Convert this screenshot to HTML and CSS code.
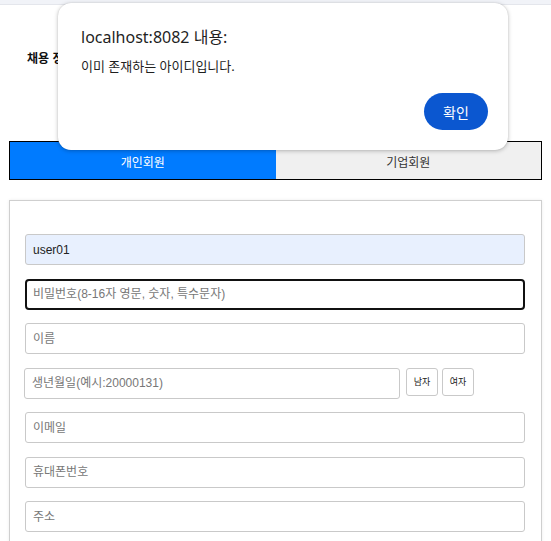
FILE: index.html
```html
<!DOCTYPE html>
<html lang="ko">
<head>
<meta charset="utf-8">
<title>회원가입</title>
<link rel="stylesheet" href="styles.css">
</head>
<body>
<div class="topbar"></div>
<main class="page">
  <header class="head">
    <h1 class="site-title">채용 정보</h1>
  </header>
  <div class="tabs">
    <div class="tab tab-active">개인회원</div>
    <div class="tab">기업회원</div>
  </div>
  <form class="card">
    <input class="field field-filled" type="text" value="user01">
    <input class="field field-focus" type="password" placeholder="비밀번호(8-16자 영문, 숫자, 특수문자)">
    <input class="field" type="text" placeholder="이름">
    <div class="birth-row">
      <input class="field field-birth" type="text" placeholder="생년월일(예시:20000131)">
      <button type="button" class="gender">남자</button>
      <button type="button" class="gender">여자</button>
    </div>
    <input class="field" type="text" placeholder="이메일">
    <input class="field" type="text" placeholder="휴대폰번호">
    <input class="field" type="text" placeholder="주소">
  </form>
</main>
<div class="dialog">
  <div class="dialog-title">localhost:8082 내용:</div>
  <div class="dialog-msg">이미 존재하는 아이디입니다.</div>
  <div class="dialog-actions">
    <button type="button" class="dialog-btn">확인</button>
  </div>
</div>
</body>
</html>
```

FILE: styles.css
```css
* { box-sizing: border-box; }
html, body { margin: 0; padding: 0; background: #fff; }
body {
  font-family: "Liberation Sans", "Noto Sans CJK KR", sans-serif;
  color: #222;
  width: 551px;
  height: 541px;
  overflow: hidden;
  position: relative;
}
.topbar {
  height: 5px;
  background: #f1f3f8;
  border-bottom: 1px solid #e4e6ec;
}
.page { padding: 0 9px; }
.head {
  height: 136px;
  padding: 44px 0 0 18px;
}
.site-title {
  margin: 0;
  font-size: 12px;
  font-weight: bold;
  color: #111;
}
.tabs {
  display: flex;
  height: 39px;
  border: 1px solid #000;
}
.tab {
  flex: 1;
  display: flex;
  align-items: center;
  justify-content: center;
  font-size: 12px;
  background: #f0f0f0;
  color: #333;
  padding-top: 1px;
}
.tab-active {
  background: #007bff;
  color: #fff;
}
.card {
  margin-top: 20px;
  border: 1px solid #cfcfcf;
  box-shadow: 0 0 3px rgba(0,0,0,0.08);
  padding: 33px 16px 40px 15px;
  display: flex;
  flex-direction: column;
  gap: 13.5px;
  height: 400px;
}
.field {
  flex: none;
  width: 500px;
  height: 31px;
  border: 1px solid #c9c9c9;
  border-radius: 3px;
  padding: 0 7px;
  font-family: "Liberation Sans", "Noto Sans CJK KR", sans-serif;
  font-size: 12px;
  color: #222;
  background: #fff;
  outline: none;
}
.field::placeholder { color: #777; }
.field-filled { background: #e8f0fe; }
.field-focus {
  border: 2px solid #111;
  border-radius: 4px;
  padding-left: 6px;
}
.birth-row {
  display: flex;
  align-items: flex-start;
  gap: 4px;
  margin-left: -1px;
}
.field-birth {
  width: 376px;
  margin-right: 2px;
}
.gender {
  width: 32px;
  height: 28px;
  padding: 0;
  border: 1px solid #c9c9c9;
  border-radius: 3px;
  background: #fff;
  font-family: "Liberation Sans", "Noto Sans CJK KR", sans-serif;
  font-size: 9px;
  color: #222;
}
.dialog {
  position: absolute;
  left: 58px;
  top: 3px;
  width: 450px;
  height: 147px;
  background: #fff;
  border-radius: 13px;
  box-shadow: 0 1px 4px rgba(0,0,0,0.25), 0 0 1px rgba(0,0,0,0.2);
  padding: 24px 20px 21px 23px;
  font-family: "Noto Sans", "Noto Sans CJK KR", sans-serif;
}
.dialog-title {
  font-size: 16px;
  color: #1f1f1f;
  line-height: 20px;
}
.dialog-msg {
  margin-top: 10px;
  font-size: 13px;
  color: #1f1f1f;
  line-height: 18px;
}
.dialog-actions {
  display: flex;
  justify-content: flex-end;
  margin-top: 18px;
}
.dialog-btn {
  width: 64px;
  height: 37px;
  border: none;
  border-radius: 19px;
  background: #0b57d0;
  color: #fff;
  font-family: "Noto Sans CJK KR", sans-serif;
  font-size: 14px;
}
```
